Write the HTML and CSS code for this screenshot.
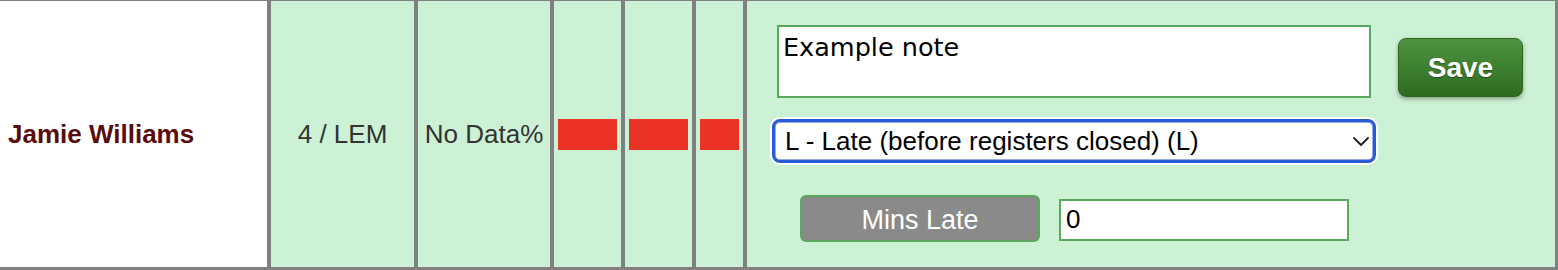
FILE: index.html
```html
<!DOCTYPE html>
<html lang="en">
<head>
<meta charset="utf-8">
<title>Register row</title>
<link rel="stylesheet" href="styles.css">
</head>
<body>
<div class="row">
  <div class="cell name">Jamie Williams</div>
  <div class="cell group">4 / LEM</div>
  <div class="cell att">No Data%</div>
  <div class="cell mark mark-wide"><span class="bar"></span></div>
  <div class="cell mark mark-wide"><span class="bar"></span></div>
  <div class="cell mark mark-narrow"><span class="bar"></span></div>
  <div class="cell edit">
    <div class="note-row">
      <textarea class="note">Example note</textarea>
      <button class="save" type="button">Save</button>
    </div>
    <div class="select-wrap">
      <select class="mark-select">
        <option>L - Late (before registers closed) (L)</option>
      </select>
      <svg class="chev" viewBox="0 0 16 9" aria-hidden="true"><path d="M1 1 L8 8 L15 1" fill="none" stroke="#1e1e1e" stroke-width="1.8" stroke-linecap="round" stroke-linejoin="round"/></svg>
    </div>
    <div class="late-row">
      <button class="mins" type="button">Mins Late</button>
      <input class="mins-input" type="text" value="0">
    </div>
  </div>
</div>
</body>
</html>
```
FILE: styles.css
```css
html, body {
  margin: 0;
  padding: 0;
  background: #ffffff;
  overflow: hidden;
}

.row {
  display: flex;
  height: 270px;
  box-sizing: border-box;
  border-top: 1px solid #808080;
  border-bottom: 3px solid #808080;
  border-right: 3px solid #808080;
  font-family: "Liberation Sans", Arial, Helvetica, sans-serif;
}

.cell {
  display: flex;
  align-items: center;
  box-sizing: border-box;
  background: #cdf1d4;
  border-left: 4px solid #808080;
}

.name {
  width: 267px;
  border-left: none;
  background: #ffffff;
  padding-left: 8px;
  font-weight: bold;
  font-size: 26px;
  color: #5a0b0b;
}

.group {
  width: 147px;
  justify-content: center;
  font-size: 26px;
  color: #333333;
}

.att {
  width: 136px;
  justify-content: center;
  font-size: 26px;
  color: #333333;
}

.mark {
  padding: 0 4px;
}

.mark-wide {
  width: 71px;
}

.mark-narrow {
  width: 51px;
}

.bar {
  flex: 1;
  height: 31px;
  margin-top: 1px;
  background: #ea3324;
}

.edit {
  width: 812px;
  flex-direction: column;
  align-items: flex-start;
  justify-content: flex-start;
  padding: 24px 0 0 25px;
}

.note-row {
  display: flex;
  align-items: flex-start;
  margin-left: 5px;
}

.note {
  width: 594px;
  height: 73px;
  box-sizing: border-box;
  margin: 0;
  border: 2px solid #5aa85c;
  padding: 5px 4px;
  font-family: "DejaVu Sans", Verdana, sans-serif;
  font-size: 25.5px;
  color: #000000;
  background: #ffffff;
  resize: none;
  outline: none;
}

.save {
  margin: 13px 0 0 27px;
  width: 125px;
  height: 59px;
  box-sizing: border-box;
  border: 1px solid #2d6521;
  border-radius: 8px;
  background: linear-gradient(to bottom, #4e933f 0%, #3d7f30 50%, #2e6c21 100%);
  box-shadow: 0 2px 4px rgba(0, 0, 0, 0.35);
  color: #ffffff;
  font-family: "Liberation Sans", Arial, sans-serif;
  font-weight: bold;
  font-size: 28px;
  text-shadow: 0 1px 1px rgba(0, 0, 0, 0.35);
  padding: 0;
}

.select-wrap {
  position: relative;
  margin-top: 21px;
}

.mark-select {
  display: block;
  width: 604px;
  height: 44px;
  box-sizing: border-box;
  margin: 0;
  -webkit-appearance: none;
  appearance: none;
  border: 3px solid #2a5bd7;
  border-radius: 8px;
  box-shadow: 0 0 0 2px #ffffff, inset 0 0 0 0.5px #2a5bd7;
  background: #ffffff;
  padding: 0 40px 0 10px;
  font-family: "Liberation Sans", Arial, sans-serif;
  font-size: 26px;
  color: #000000;
  outline: none;
}

.chev {
  position: absolute;
  right: 7px;
  top: 18px;
  width: 16px;
  height: 9px;
  pointer-events: none;
}

.late-row {
  display: flex;
  align-items: center;
  gap: 19px;
  margin: 32px 0 0 28px;
}

.mins {
  width: 240px;
  height: 47px;
  box-sizing: border-box;
  margin: 0;
  border: 2px solid #5aa85c;
  border-radius: 6px;
  background: #8b8a8a;
  color: #ffffff;
  font-family: "Liberation Sans", Arial, sans-serif;
  font-size: 27px;
  padding: 3px 0 0 0;
}

.mins-input {
  width: 290px;
  height: 42px;
  box-sizing: border-box;
  margin: 2px 0 0 0;
  border: 2px solid #5aa85c;
  padding: 0 5px;
  font-family: "Liberation Sans", Arial, sans-serif;
  font-size: 26px;
  color: #000000;
  background: #ffffff;
  outline: none;
}
```
